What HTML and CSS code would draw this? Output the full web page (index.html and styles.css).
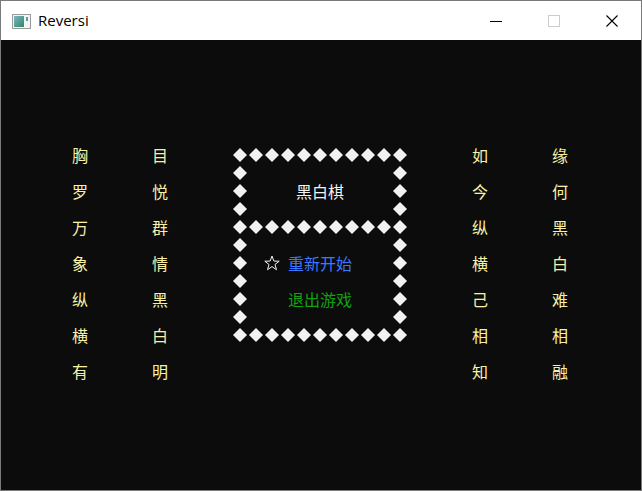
FILE: index.html
```html
<!DOCTYPE html>
<html lang="zh-CN">
<head>
<meta charset="utf-8">
<title>Reversi</title>
<link rel="stylesheet" href="styles.css">
</head>
<body>
<div class="window">
  <div class="titlebar">
    <svg class="app-icon" width="19" height="15" viewBox="0 0 19 15">
      <defs>
        <linearGradient id="g" x1="0" y1="0" x2="1" y2="1">
          <stop offset="0" stop-color="#7fb4c8"/>
          <stop offset="1" stop-color="#2f8a5c"/>
        </linearGradient>
      </defs>
      <rect x="0.5" y="0.5" width="18" height="14" fill="#f4f4f4" stroke="#9a9a9a"/>
      <rect x="2" y="2" width="10" height="11" fill="url(#g)"/>
      <rect x="14" y="3" width="2" height="4" fill="#4f9db0"/>
    </svg>
    <span class="title">Reversi</span>
    <div class="controls">
      <div class="btn"><svg width="12" height="12" viewBox="0 0 12 12"><line x1="0" y1="6.5" x2="12" y2="6.5" stroke="#000" stroke-width="1"/></svg></div>
      <div class="btn"><svg width="12" height="12" viewBox="0 0 12 12"><rect x="0.5" y="0.5" width="11" height="11" fill="none" stroke="#cccccc" stroke-width="1"/></svg></div>
      <div class="btn"><svg width="12" height="12" viewBox="0 0 12 12"><path d="M0.5 0.5 L11.5 11.5 M11.5 0.5 L0.5 11.5" stroke="#000" stroke-width="1.1"/></svg></div>
    </div>
  </div>
  <div class="console">
    <div class="col poem">
      <span>胸</span><span>罗</span><span>万</span><span>象</span><span>纵</span><span>横</span><span>有</span>
    </div>
    <div class="col poem">
      <span>目</span><span>悦</span><span>群</span><span>情</span><span>黑</span><span>白</span><span>明</span>
    </div>
    <div class="board">
      <i class="d"></i><i class="d"></i><i class="d"></i><i class="d"></i><i class="d"></i><i class="d"></i><i class="d"></i><i class="d"></i><i class="d"></i><i class="d"></i><i class="d"></i>
      <i class="d"></i><span class="inner"></span><i class="d"></i>
      <i class="d"></i><span class="inner heading">黑白棋</span><i class="d"></i>
      <i class="d"></i><span class="inner"></span><i class="d"></i>
      <i class="d"></i><i class="d"></i><i class="d"></i><i class="d"></i><i class="d"></i><i class="d"></i><i class="d"></i><i class="d"></i><i class="d"></i><i class="d"></i><i class="d"></i>
      <i class="d"></i><span class="inner"></span><i class="d"></i>
      <i class="d"></i><span class="inner menu start"><svg class="star" width="16" height="16" viewBox="0 0 16 16"><polygon points="8,1 9.9,6.1 15.2,6.2 11,9.5 12.5,14.7 8,11.6 3.5,14.7 5,9.5 0.8,6.2 6.1,6.1" fill="none" stroke="#f2f2f2" stroke-width="1"/></svg><span class="label">重新开始</span></span><i class="d"></i>
      <i class="d"></i><span class="inner"></span><i class="d"></i>
      <i class="d"></i><span class="inner menu exit"><span class="label">退出游戏</span></span><i class="d"></i>
      <i class="d"></i><span class="inner"></span><i class="d"></i>
      <i class="d"></i><i class="d"></i><i class="d"></i><i class="d"></i><i class="d"></i><i class="d"></i><i class="d"></i><i class="d"></i><i class="d"></i><i class="d"></i><i class="d"></i>
    </div>
    <div class="col poem">
      <span>如</span><span>今</span><span>纵</span><span>横</span><span>己</span><span>相</span><span>知</span>
    </div>
    <div class="col poem">
      <span>缘</span><span>何</span><span>黑</span><span>白</span><span>难</span><span>相</span><span>融</span>
    </div>
  </div>
</div>
</body>
</html>
```
FILE: styles.css
```css
* { box-sizing: border-box; }
html, body { margin: 0; padding: 0; background: #0c0c0c; }
.window {
  width: 642px;
  height: 491px;
  border: 1px solid #7a7a7a;
  display: flex;
  flex-direction: column;
  overflow: hidden;
}
.titlebar {
  height: 39px;
  background: #ffffff;
  display: flex;
  align-items: center;
  flex: none;
}
.app-icon { margin-left: 11px; margin-top: 1px; flex: none; }
.title {
  margin-left: 7px;
  font-family: "Open Sans", "Noto Sans", sans-serif;
  font-size: 15px;
  color: #000;
  margin-top: -1px;
}
.controls { margin-left: auto; display: flex; height: 100%; }
.btn {
  width: 58px;
  height: 100%;
  display: flex;
  align-items: center;
  justify-content: center;
}
.console {
  flex: 1;
  background: #0c0c0c;
  display: flex;
  align-items: flex-start;
  gap: 64px;
  padding: 106px 0 0 71px;
  font-family: "Noto Sans CJK SC", sans-serif;
  font-size: 16px;
  line-height: 18px;
}
.col {
  display: flex;
  flex-direction: column;
  gap: 18px;
  width: 16px;
}
.poem { color: #f9f1a5; }
.poem span { display: block; height: 18px; width: 16px; }
.board {
  display: grid;
  grid-template-columns: repeat(11, 16px);
  grid-auto-rows: 18px;
}
.d { position: relative; display: block; }
.d::before {
  content: "";
  position: absolute;
  left: 1px;
  top: 2px;
  width: 14px;
  height: 14px;
  background: #f2f2f2;
  clip-path: polygon(50% 0, 100% 50%, 50% 100%, 0 50%);
}
.inner {
  grid-column: span 9;
  display: flex;
  align-items: center;
  white-space: nowrap;
}
.heading { color: #f2f2f2; padding-left: 48px; }
.menu .label { display: block; }
.start { padding-left: 16px; color: #3b78ff; }
.start .star { margin-right: 8px; flex: none; }
.exit { padding-left: 40px; color: #13a10e; }
```
